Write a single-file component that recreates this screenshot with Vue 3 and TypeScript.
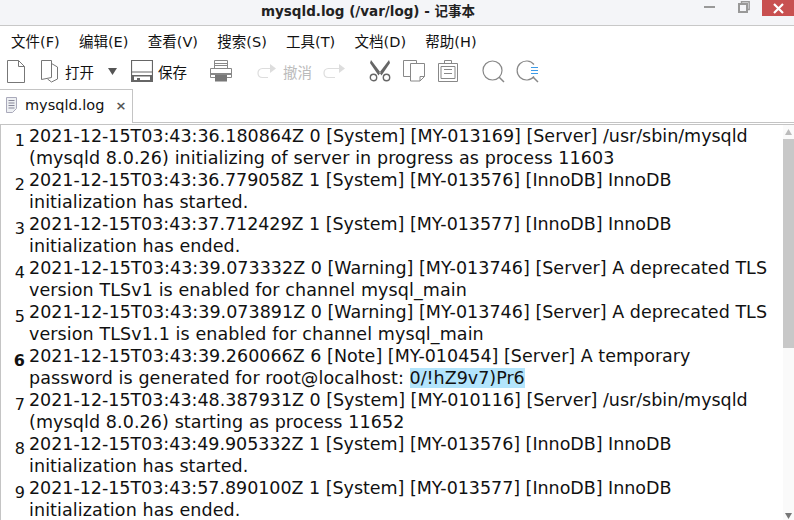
<script setup lang="ts">
const menus: string[] = ['文件(F)', '编辑(E)', '查看(V)', '搜索(S)', '工具(T)', '文档(D)', '帮助(H)']
interface Line { n: number; a: string; b: string; track: number; bold?: boolean }
const lines: Line[] = [
  { n: 1, track: -0.013, a: '2021-12-15T03:43:36.180864Z 0 [System] [MY-013169] [Server] /usr/sbin/mysqld', b: '(mysqld 8.0.26) initializing of server in progress as process 11603' },
  { n: 2, track: -0.03, a: '2021-12-15T03:43:36.779058Z 1 [System] [MY-013576] [InnoDB] InnoDB', b: 'initialization has started.' },
  { n: 3, track: -0.03, a: '2021-12-15T03:43:37.712429Z 1 [System] [MY-013577] [InnoDB] InnoDB', b: 'initialization has ended.' },
  { n: 4, track: 0.03, a: '2021-12-15T03:43:39.073332Z 0 [Warning] [MY-013746] [Server] A deprecated TLS', b: 'version TLSv1 is enabled for channel mysql_main' },
  { n: 5, track: 0.03, a: '2021-12-15T03:43:39.073891Z 0 [Warning] [MY-013746] [Server] A deprecated TLS', b: 'version TLSv1.1 is enabled for channel mysql_main' },
  { n: 6, track: 0.015, a: '2021-12-15T03:43:39.260066Z 6 [Note] [MY-010454] [Server] A temporary', b: 'password is generated for root@localhost: ', bold: true },
  { n: 7, track: -0.013, a: '2021-12-15T03:43:48.387931Z 0 [System] [MY-010116] [Server] /usr/sbin/mysqld', b: '(mysqld 8.0.26) starting as process 11652' },
  { n: 8, track: -0.03, a: '2021-12-15T03:43:49.905332Z 1 [System] [MY-013576] [InnoDB] InnoDB', b: 'initialization has started.' },
  { n: 9, track: -0.03, a: '2021-12-15T03:43:57.890100Z 1 [System] [MY-013577] [InnoDB] InnoDB', b: 'initialization has ended.' },
]
</script>

<template>
  <div class="win">
    <header class="title">
      <span class="title-text">mysqld.log (/var/log) - 记事本</span>
      <div class="controls">
        <span class="min"></span>
        <svg class="restore" width="12" height="12" viewBox="0 0 12 12"><path d="M3.500 2.500V.8h7.700v7.700H9" fill="none" stroke="#999" stroke-width="1.400"/><rect x="1" y="3" width="8" height="8" fill="none" stroke="#999" stroke-width="2"/></svg>
        <span class="close"><svg width="11" height="11" viewBox="0 0 11 11"><path d="M1 1l9 9M10 1l-9 9" stroke="#fff" stroke-width="2.200"/></svg></span>
      </div>
    </header>
    <nav class="menu"><span v-for="m in menus" :key="m">{{ m }}</span></nav>
    <div class="toolbar">
      <svg class="i new" width="18" height="23" viewBox="0 0 18 23"><path d="M.5.500h11l6 6v16H.5zM11.500.500v6h6" fill="none" stroke="#777"/></svg>
      <svg class="i open" width="20" height="23" viewBox="0 0 20 23"><path d="M.5.500h10v17L.5 19.500zM10.500 3.500l6 3.500v12l-6 3-4-3" fill="none" stroke="#777"/></svg>
      <span class="tb-label l-open">打开</span>
      <svg class="caret" width="9" height="7" viewBox="0 0 9 7"><path d="M0 0h9L4.500 7z" fill="#555"/></svg>
      <svg class="i save" width="22" height="22" viewBox="0 0 22 22"><path d="M.5.500h21v21H.5zM.5 12h21" fill="none" stroke="#666" stroke-width="1.200"/><path d="M1 15h20v7H1z" fill="#666"/><path d="M3 16.500h16V20H3z" fill="#fff"/><path d="M6 18h3v3H6z" fill="#666"/></svg>
      <span class="tb-label l-save">保存</span>
      <svg class="i print" width="22" height="22" viewBox="0 0 22 22"><path d="M4.500 8V.5h13V8M4.500 3.500h13M4.500 5.500h13" fill="none" stroke="#888"/><path d="M.5 8.500h21v9h-21z" fill="#fff" stroke="#888"/><rect x="1" y="13" width="20" height="2" fill="#888"/><rect x="5" y="15" width="12" height="6.500" fill="#777"/></svg>
      <svg class="i undo" width="20" height="16" viewBox="0 0 20 16"><path d="M13 5.500H5.500C2.500 5.500 1 7.500 1 10s1.500 4.500 4.500 4.500H11" fill="none" stroke="#ddd" stroke-width="1.200"/><path d="M13 1l6 4.500-6 4.500z" fill="#ddd"/></svg>
      <span class="tb-label l-undo">撤消</span>
      <svg class="i redo" width="24" height="16" viewBox="0 0 24 16"><path d="M17 5.500H6.500C3.500 5.500 2 7.500 2 10s1.500 4.500 4.500 4.500H13" fill="none" stroke="#ddd" stroke-width="1.200"/><path d="M17 1l6 4.500-6 4.500z" fill="#ddd"/></svg>
      <svg class="i cut" width="22" height="22" viewBox="0 0 22 22"><path d="M2 0l9.500 12.500-2 3L1 3zM20 0L10.500 12.500l2 3L21 3z" fill="#666"/><circle cx="4.500" cy="17.500" r="3.200" fill="#fff" stroke="#666" stroke-width="1.400"/><circle cx="17.500" cy="17.500" r="3.200" fill="#fff" stroke="#666" stroke-width="1.400"/></svg>
      <svg class="i copy" width="22" height="22" viewBox="0 0 22 22"><path d="M7.500 16.500H.5V.5h13v3" fill="none" stroke="#888"/><path d="M7.500 3.500h14v13l-4.500 4.500H7.500zM21.500 16.500H17V21" fill="#fff" stroke="#888"/></svg>
      <svg class="i paste" width="20" height="22" viewBox="0 0 20 22"><path d="M.5 3.500h19v18H.5zM6.500 3.500V.5h7v3" fill="none" stroke="#888"/><path d="M3 6.500h14v12H3zM6 9.500h8M6 13.500h8" fill="none" stroke="#888"/></svg>
      <svg class="i find" width="23" height="23" viewBox="0 0 23 23"><circle cx="10.500" cy="10.500" r="9.500" fill="none" stroke="#888" stroke-width="1.200"/><path d="M17 17l5 5" stroke="#888" stroke-width="1.500"/></svg>
      <svg class="i replace" width="23" height="23" viewBox="0 0 23 23"><path d="M18 4.500A9.500 9.500 0 1 0 18 16.500" fill="none" stroke="#888" stroke-width="1.200"/><path d="M17 17l5 5" stroke="#888" stroke-width="1.500"/><path d="M15 7.500h7M15 10.500h7M15 13.500h7" stroke="#3c9be8" stroke-width="1"/></svg>
    </div>
    <div class="tabs">
      <div class="tab">
        <svg width="11" height="16" viewBox="0 0 11 16"><path d="M.5.500h10v11l-4 4h-6z" fill="#eef0f3" stroke="#aab"/><path d="M2.500 3.500h6M2.500 6h6M2.500 8.500h6M2.500 11h6" stroke="#889"/></svg>
        <span class="tab-name">mysqld.log</span>
        <span class="tab-x">×</span>
      </div>
    </div>
    <main class="editor">
      <div class="code">
        <div v-for="l in lines" :key="l.n" class="row">
          <span class="num" :class="{ bold: l.bold }">{{ l.n }}</span>
          <div class="txt">
            <div :style="{ letterSpacing: l.track + 'px' }">{{ l.a }}</div>
            <div class="second">{{ l.b }}<mark v-if="l.n === 6" class="hl">0/!hZ9v7)Pr6</mark></div>
          </div>
        </div>
      </div>
      <div class="scroll">
        <svg class="arrow" width="7" height="6" viewBox="0 0 7 6"><path d="M3.500 0L7 6H0z" fill="#bbb"/></svg>
        <div class="thumb"></div>
        <div class="track"></div>
        <svg class="arrow down" width="7" height="6" viewBox="0 0 7 6"><path d="M0 0h7L3.500 6z" fill="#777"/></svg>
      </div>
    </main>
  </div>
</template>

<style scoped>
.win { width: 794px; height: 520px; overflow: hidden; background: #fff; display: flex; flex-direction: column; font-family: "DejaVu Sans", "Noto Sans CJK SC", sans-serif; color: #111; }
.title { height: 25px; flex: none; background: #f4f5f8; border-bottom: 1px solid #c8c8c8; display: flex; justify-content: center; position: relative; padding-right: 58px; }
.title-text { font-size: 13.5px; font-weight: 700; line-height: 22px; color: #222; }
.controls { position: absolute; right: 0; top: 0; display: flex; align-items: flex-start; }
.min { width: 11px; height: 2px; background: #999; margin: 6px 23px 0 0; }
.restore { margin: 1px 12px 0 0; }
.close { width: 32px; height: 16px; background: #c85050; display: flex; align-items: center; justify-content: center; }
.menu { height: 30px; box-sizing: border-box; flex: none; display: flex; gap: 19.3px; padding: 0 0 2px 11px; align-items: center; font-size: 14.5px; }
.toolbar { height: 30px; flex: none; display: flex; align-items: center; }
.i, .caret { flex: none; }
.new { margin-left: 7px; }
.open { margin-left: 16px; }
.tb-label { font-size: 14.5px; white-space: nowrap; }
.l-open { margin-left: 4px; }
.caret { margin-left: 14px; }
.save { margin-left: 14px; }
.l-save { margin-left: 5px; }
.print { margin-left: 23px; }
.undo { margin-left: 25px; }
.l-undo { margin-left: 6px; color: #bbb; }
.redo { margin-left: 10px; }
.cut { margin-left: 23px; }
.copy { margin-left: 12px; }
.paste { margin-left: 13px; }
.find { margin-left: 24px; }
.replace { margin-left: 11px; }
.tabs { height: 37px; box-sizing: border-box; flex: none; border-bottom: 1px solid #c4c4c4; padding-top: 3px; }
.tab { width: 133px; height: 34px; box-sizing: border-box; border-top: 1px solid #c4c4c4; border-right: 1px solid #c4c4c4; background: #fff; display: flex; align-items: center; padding: 0 0 3px 6px; }
.tab-name { font-size: 14.5px; margin-left: 8px; }
.tab-x { font-size: 13px; margin-left: 11px; color: #555; font-weight: 700; }
.editor { flex: 1; min-height: 0; display: flex; margin-top: 1px; border-top: 1px solid #c4c4c4; border-left: 1px solid #c4c4c4; overflow: hidden; }
.code { flex: 1; min-width: 0; }
.row { display: flex; }
.num { width: 28px; box-sizing: border-box; padding: 5px 4px 0 0; text-align: right; font-size: 16px; line-height: 22px; flex: none; }
.num.bold { font-weight: 700; }
.txt { font-size: 17.5px; line-height: 22px; white-space: pre; }
.second { letter-spacing: 0.1px; }
.hl { background: #b3e5fc; color: inherit; letter-spacing: 0; }
.scroll { width: 11px; flex: none; display: flex; flex-direction: column; align-items: center; background: #fafafa; }
.arrow { flex: none; margin-top: 4px; }
.thumb { width: 11px; height: 209px; background: #c8c8c8; margin-top: 4px; flex: none; }
.track { flex: 1; }
.arrow.down { margin: 0 0 1px; }
</style>
